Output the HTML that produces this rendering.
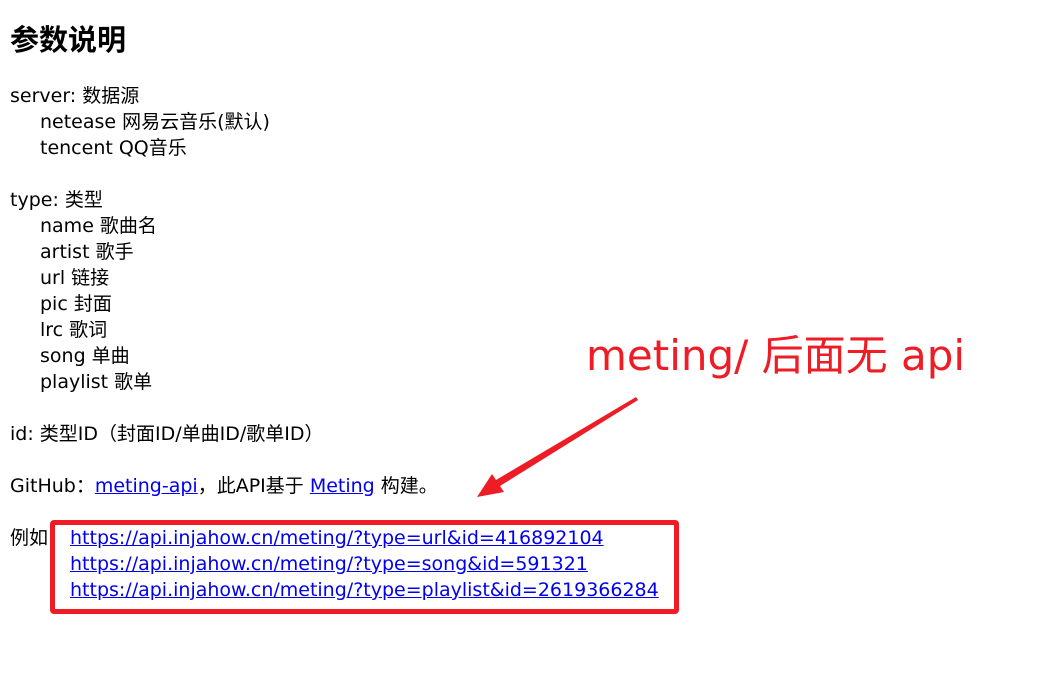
<!DOCTYPE html>
<html><head><meta charset="utf-8"><style>
html,body{margin:0;padding:0;background:#fff;width:1044px;height:684px;overflow:hidden;position:relative}
body{font-family:"DejaVu Sans","Noto Sans CJK SC",sans-serif;font-size:19px;color:#000}
.l{position:absolute;white-space:nowrap;line-height:26px;height:26px}
a{color:#0000ee;text-decoration:underline}
h1{position:absolute;left:10px;top:18px;margin:0;font-size:29px;line-height:40px;font-weight:bold;font-family:"Noto Sans CJK SC",sans-serif}
.box{position:absolute;left:50px;top:520px;width:619px;height:84px;border:5px solid #ee1c25;border-radius:4px}
.red{position:absolute;left:586px;top:329px;font-size:42px;line-height:54px;color:#ee1c25;white-space:nowrap}
</style></head><body>
<h1>参数说明</h1>
<div class="l" style="left:10px;top:83px">server: 数据源</div>
<div class="l" style="left:40px;top:109px">netease 网易云音乐(默认)</div>
<div class="l" style="left:40px;top:135px">tencent QQ音乐</div>
<div class="l" style="left:10px;top:187px">type: 类型</div>
<div class="l" style="left:40px;top:213px">name 歌曲名</div>
<div class="l" style="left:40px;top:239px">artist 歌手</div>
<div class="l" style="left:40px;top:265px">url 链接</div>
<div class="l" style="left:40px;top:291px">pic 封面</div>
<div class="l" style="left:40px;top:317px">lrc 歌词</div>
<div class="l" style="left:40px;top:343px">song 单曲</div>
<div class="l" style="left:40px;top:369px">playlist 歌单</div>
<div class="l" style="left:10px;top:421px">id: 类型ID（封面ID/单曲ID/歌单ID）</div>
<div class="l" style="left:10px;top:473px">GitHub：<a>meting-api</a>，此API基于 <a>Meting</a> 构建。</div>
<div class="l" style="left:10px;top:525px">例如：</div>
<div class="box"></div>
<div class="l" style="left:70px;top:525px"><a>https://api.injahow.cn/meting/?type=url&amp;id=416892104</a></div>
<div class="l" style="left:70px;top:551px"><a>https://api.injahow.cn/meting/?type=song&amp;id=591321</a></div>
<div class="l" style="left:70px;top:577px"><a>https://api.injahow.cn/meting/?type=playlist&amp;id=2619366284</a></div>
<div class="red">meting/ 后面无 api</div>
<svg style="position:absolute;left:0;top:0" width="1044" height="684">
<polygon points="636,397 638,400 500,486 504,492 477,497 492,474 496,480" fill="#ee1c25"/>
</svg>
</body></html>
